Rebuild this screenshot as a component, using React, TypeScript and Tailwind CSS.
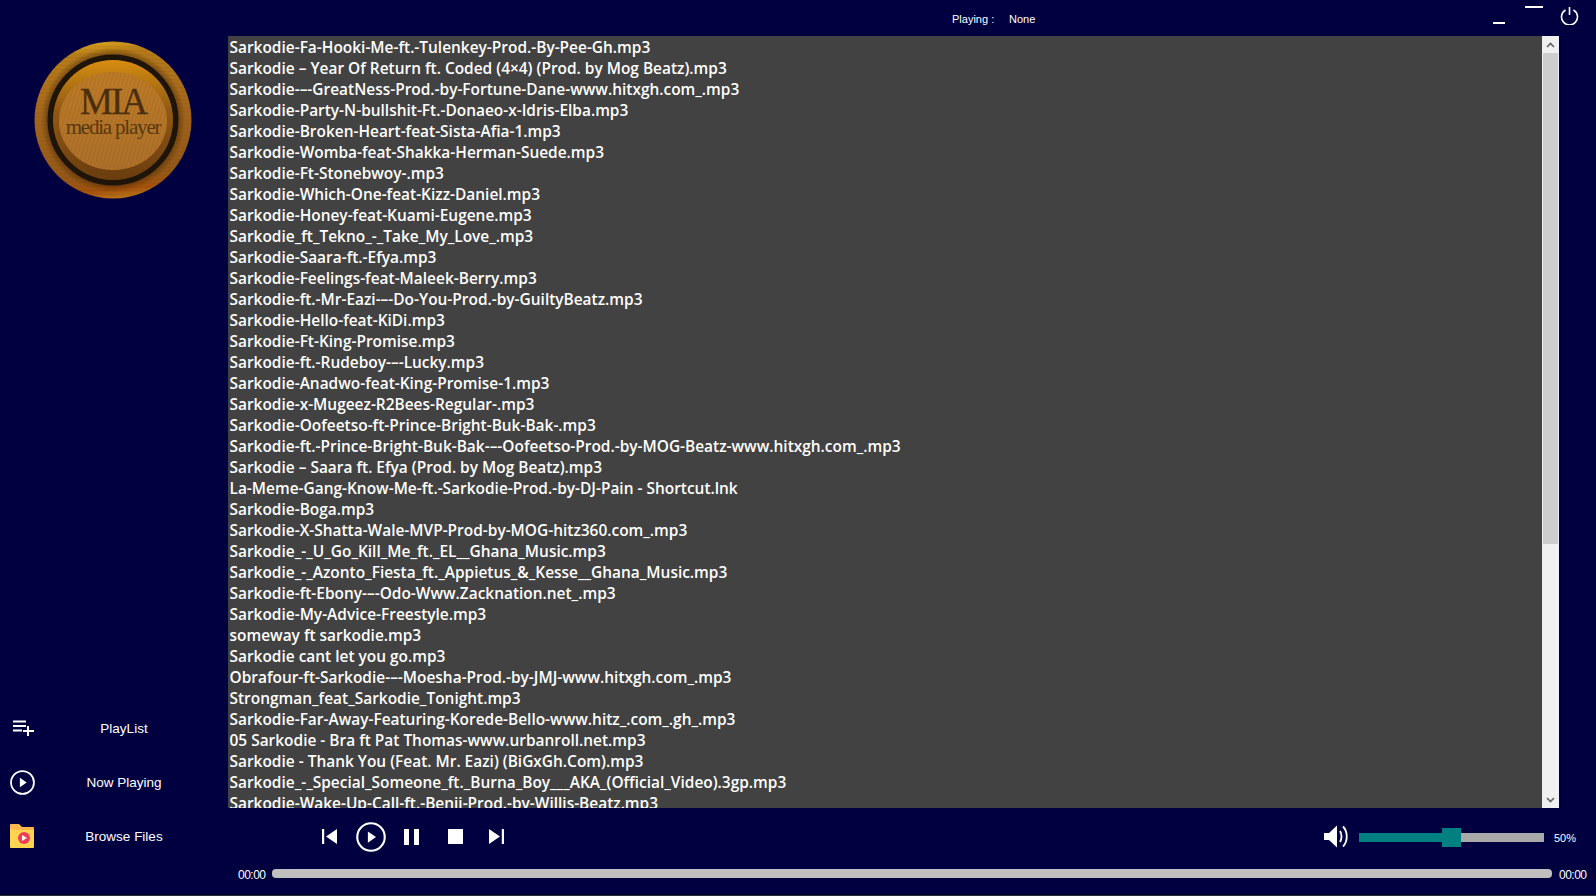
import React from "react";

const tracks = [
  "Sarkodie-Fa-Hooki-Me-ft.-Tulenkey-Prod.-By-Pee-Gh.mp3",
  "Sarkodie – Year Of Return ft. Coded (4×4) (Prod. by Mog Beatz).mp3",
  "Sarkodie-–-GreatNess-Prod.-by-Fortune-Dane-www.hitxgh.com_.mp3",
  "Sarkodie-Party-N-bullshit-Ft.-Donaeo-x-Idris-Elba.mp3",
  "Sarkodie-Broken-Heart-feat-Sista-Afia-1.mp3",
  "Sarkodie-Womba-feat-Shakka-Herman-Suede.mp3",
  "Sarkodie-Ft-Stonebwoy-.mp3",
  "Sarkodie-Which-One-feat-Kizz-Daniel.mp3",
  "Sarkodie-Honey-feat-Kuami-Eugene.mp3",
  "Sarkodie_ft_Tekno_-_Take_My_Love_.mp3",
  "Sarkodie-Saara-ft.-Efya.mp3",
  "Sarkodie-Feelings-feat-Maleek-Berry.mp3",
  "Sarkodie-ft.-Mr-Eazi-–-Do-You-Prod.-by-GuiltyBeatz.mp3",
  "Sarkodie-Hello-feat-KiDi.mp3",
  "Sarkodie-Ft-King-Promise.mp3",
  "Sarkodie-ft.-Rudeboy-–-Lucky.mp3",
  "Sarkodie-Anadwo-feat-King-Promise-1.mp3",
  "Sarkodie-x-Mugeez-R2Bees-Regular-.mp3",
  "Sarkodie-Oofeetso-ft-Prince-Bright-Buk-Bak-.mp3",
  "Sarkodie-ft.-Prince-Bright-Buk-Bak-–-Oofeetso-Prod.-by-MOG-Beatz-www.hitxgh.com_.mp3",
  "Sarkodie – Saara ft. Efya (Prod. by Mog Beatz).mp3",
  "La-Meme-Gang-Know-Me-ft.-Sarkodie-Prod.-by-DJ-Pain - Shortcut.lnk",
  "Sarkodie-Boga.mp3",
  "Sarkodie-X-Shatta-Wale-MVP-Prod-by-MOG-hitz360.com_.mp3",
  "Sarkodie_-_U_Go_Kill_Me_ft._EL__Ghana_Music.mp3",
  "Sarkodie_-_Azonto_Fiesta_ft._Appietus_&_Kesse__Ghana_Music.mp3",
  "Sarkodie-ft-Ebony-–-Odo-Www.Zacknation.net_.mp3",
  "Sarkodie-My-Advice-Freestyle.mp3",
  "someway ft sarkodie.mp3",
  "Sarkodie cant let you go.mp3",
  "Obrafour-ft-Sarkodie-–-Moesha-Prod.-by-JMJ-www.hitxgh.com_.mp3",
  "Strongman_feat_Sarkodie_Tonight.mp3",
  "Sarkodie-Far-Away-Featuring-Korede-Bello-www.hitz_.com_.gh_.mp3",
  "05 Sarkodie - Bra ft Pat Thomas-www.urbanroll.net.mp3",
  "Sarkodie - Thank You (Feat. Mr. Eazi) (BiGxGh.Com).mp3",
  "Sarkodie_-_Special_Someone_ft._Burna_Boy___AKA_(Official_Video).3gp.mp3",
  "Sarkodie-Wake-Up-Call-ft.-Benji-Prod.-by-Willis-Beatz.mp3",
];

function Logo() {
  const rimGrain = Array.from({ length: 40 }, (_, i) => i);
  const grain = Array.from({ length: 42 }, (_, i) => i);
  return (
    <svg width="160" height="160" viewBox="0 0 160 160">
      <defs>
        <linearGradient id="rim" x1="0.45" y1="0" x2="0.55" y2="1">
          <stop offset="0" stopColor="#d8a21e" />
          <stop offset="0.07" stopColor="#b67c1a" />
          <stop offset="0.4" stopColor="#a5681d" />
          <stop offset="0.85" stopColor="#935818" />
          <stop offset="0.94" stopColor="#a4520c" />
          <stop offset="1" stopColor="#b9761a" />
        </linearGradient>
        <radialGradient id="rimShade" cx="0.5" cy="0.5" r="0.5">
          <stop offset="0.84" stopColor="#3c2006" stopOpacity="0.4" />
          <stop offset="0.92" stopColor="#3c2006" stopOpacity="0" />
        </radialGradient>
        <linearGradient id="band" x1="0.5" y1="0" x2="0.5" y2="1">
          <stop offset="0" stopColor="#d98c0f" />
          <stop offset="0.14" stopColor="#bd7c12" />
          <stop offset="0.42" stopColor="#915815" />
          <stop offset="1" stopColor="#6a3d0e" />
        </linearGradient>
        <linearGradient id="face" x1="0.5" y1="0" x2="0.5" y2="1">
          <stop offset="0" stopColor="#bb7a26" />
          <stop offset="1" stopColor="#ac702a" />
        </linearGradient>
        <clipPath id="faceClip">
          <ellipse cx="79" cy="80" rx="54" ry="49" />
        </clipPath>
        <clipPath id="rimClip">
          <circle cx="79" cy="79" r="78" />
        </clipPath>
      </defs>
      <circle cx="79" cy="79" r="78.5" fill="url(#rim)" />
      <g clipPath="url(#rimClip)">
        {rimGrain.map((i) => (
          <line key={i} x1="0" x2="160" y1={i * 4} y2={i * 4 + 3} stroke="#5d340a" strokeOpacity="0.1" strokeWidth="1" />
        ))}
      </g>
      <circle cx="79" cy="79" r="78.5" fill="url(#rimShade)" />
      <circle cx="79" cy="79" r="62.5" fill="none" stroke="#1f1408" strokeWidth="6" />
      <circle cx="79" cy="79" r="60" fill="url(#band)" />
      <ellipse cx="79" cy="80" rx="54" ry="49" fill="url(#face)" />
      <g clipPath="url(#faceClip)">
        {grain.map((i) => (
          <line key={i} x1={i * 4 - 20} y1="140" x2={i * 4 + 15} y2="20" stroke="#7a4a14" strokeOpacity="0.14" strokeWidth="1" />
        ))}
      </g>
      <text x="79" y="73" textAnchor="middle" fontFamily="'Liberation Serif', serif" fontSize="37" letterSpacing="-2" fill="#4a2e0e" stroke="#4a2e0e" strokeWidth="0.3">MIA</text>
      <text x="79" y="93" textAnchor="middle" fontFamily="'Liberation Serif', serif" fontSize="21" letterSpacing="-1.2" fill="#58380f">media player</text>
    </svg>
  );
}

function SideRow({ icon, label }: { icon: React.ReactNode; label: string }) {
  return (
    <div className="flex h-[54px] items-center">
      <div className="flex w-[44px] justify-center">{icon}</div>
      <div className="w-[160px] pt-[2px] text-center text-[13.5px] text-white">{label}</div>
    </div>
  );
}

function CircleIcon({ size }: { size: number }) {
  return (
    <svg width={size} height={size} viewBox="0 0 24 24">
      <circle cx="12" cy="12" r="11" fill="none" stroke="white" strokeWidth="1.7" />
      <path d="M9.5 7.5 L16 12 L9.5 16.5 Z" fill="white" />
    </svg>
  );
}

export default function App() {
  return (
    <div className="flex h-[896px] w-[1596px] overflow-hidden border-b border-[#2c2c2c] bg-[#000040] font-['Liberation_Sans',sans-serif] text-white">
      <aside className="flex w-[228px] shrink-0 flex-col pb-[32px] pt-[41px]">
        <div className="ml-[34px]">
          <Logo />
        </div>
        <div className="mt-auto flex flex-col">
          <SideRow
            label="PlayList"
            icon={
              <svg className="ml-[3px]" width="22" height="16" viewBox="0 0 22 16">
                <path d="M0 1.5h13M0 6h13M0 10.5h9M15 6v10M10 11h11" stroke="white" strokeWidth="2" fill="none" />
              </svg>
            }
          />
          <SideRow label="Now Playing" icon={<CircleIcon size={25} />} />
          <SideRow
            label="Browse Files"
            icon={
              <svg className="-mt-[2px]" width="24" height="25" viewBox="0 0 24 25">
                <path d="M0 2a1 1 0 0 1 1-1h8l3 3h11a1 1 0 0 1 1 1v19H1a1 1 0 0 1-1-1z" fill="#ffb74d" />
                <path d="M4 7h20v17a1 1 0 0 1-1 1H1a1 1 0 0 1-1-1V6h3z" fill="#ffd54f" />
                <circle cx="14" cy="15" r="6" fill="#ef3d55" />
                <path d="M12 12l5 3-5 3z" fill="white" />
              </svg>
            }
          />
        </div>
      </aside>

      <main className="flex min-w-0 flex-1 flex-col">
        <header className="relative flex h-[36px] shrink-0">
          <div className="ml-[724px] mt-[13px] flex text-[11px] leading-[13px]">
            <span className="w-[57px]">Playing :</span>
            <span>None</span>
          </div>
          <div className="ml-auto flex">
            <div className="mr-[20px] mt-[22px] h-[2px] w-[12px] bg-white" />
            <div className="mr-[17px] mt-[6px] h-[2px] w-[18px] bg-white" />
            <svg className="mr-[17px] mt-[6px]" width="19" height="19" viewBox="0 0 19 19">
              <path d="M5.5 4a8 8 0 1 0 8 0M9.5 1v8" stroke="white" strokeWidth="1.6" fill="none" />
            </svg>
          </div>
        </header>

        <div className="flex h-[772px] w-[1331px] shrink-0">
          <div className="min-w-0 flex-1 overflow-hidden bg-[#424242] pl-[1.5px] pt-[1px] font-['Open_Sans',sans-serif] text-[15.45px] font-semibold leading-[21px]">
            {tracks.map((t) => (
              <div key={t} className="h-[21px] whitespace-nowrap">{t}</div>
            ))}
          </div>
          <div className="flex w-[17px] shrink-0 flex-col bg-[#f0f0f0]">
            <div className="flex h-[17px] items-center justify-center">
              <svg width="9" height="6" viewBox="0 0 9 6"><path d="M1 5l3.5-3.5L8 5" stroke="#606060" strokeWidth="1.6" fill="none" /></svg>
            </div>
            <div className="mx-[1px] h-[491px] bg-[#cdcdcd]" />
            <div className="mt-auto flex h-[17px] items-center justify-center">
              <svg width="9" height="6" viewBox="0 0 9 6"><path d="M1 1l3.5 3.5L8 1" stroke="#606060" strokeWidth="1.6" fill="none" /></svg>
            </div>
          </div>
        </div>

        <div className="flex h-[56px] shrink-0 items-center pt-[1px]">
          <svg className="ml-[94px]" width="15" height="15" viewBox="0 0 15 15">
            <path d="M0 0h2.2v15H0zM15 0v15L4 7.5z" fill="white" />
          </svg>
          <div className="ml-[19px]"><CircleIcon size={30} /></div>
          <svg className="ml-[18px]" width="15" height="16" viewBox="0 0 15 16">
            <path d="M0 0h5v16H0zM10 0h5v16h-5z" fill="white" />
          </svg>
          <svg className="ml-[29px]" width="15" height="15" viewBox="0 0 15 15">
            <rect width="15" height="15" fill="white" />
          </svg>
          <svg className="ml-[26px]" width="15" height="15" viewBox="0 0 15 15">
            <path d="M0 0v15l11-7.5zM12.8 0H15v15h-2.2z" fill="white" />
          </svg>
          <svg className="ml-[820px]" width="25" height="23" viewBox="0 0 25 23">
            <path d="M0 8h5l8-7.5v22L5 15H0z" fill="white" />
            <path d="M16 6c2 3 2 8 0 11M19 1.5c5 5 5 15 0 20" stroke="white" strokeWidth="1.8" fill="none" />
          </svg>
          <div className="ml-[10px] mt-[2px] flex h-[9px] w-[185px] items-center bg-[#a9a9a9]">
            <div className="h-[9px] w-[83px] bg-[#008080]" />
            <div className="h-[19px] w-[19px] bg-[#008080]" />
          </div>
          <div className="ml-[10px] mt-[4px] text-[11px] leading-none">50%</div>
        </div>

        <div className="flex h-[31px] items-start">
          <span className="ml-[10px] mt-[4px] w-[34px] text-[12px] leading-[14px] tracking-[-0.5px]">00:00</span>
          <div className="mt-[5px] h-[9px] w-[1280px] rounded-[4px] bg-[#bfbfbf]" />
          <span className="ml-[7px] mt-[4px] text-[12px] leading-[14px] tracking-[-0.5px]">00:00</span>
        </div>
      </main>
    </div>
  );
}
